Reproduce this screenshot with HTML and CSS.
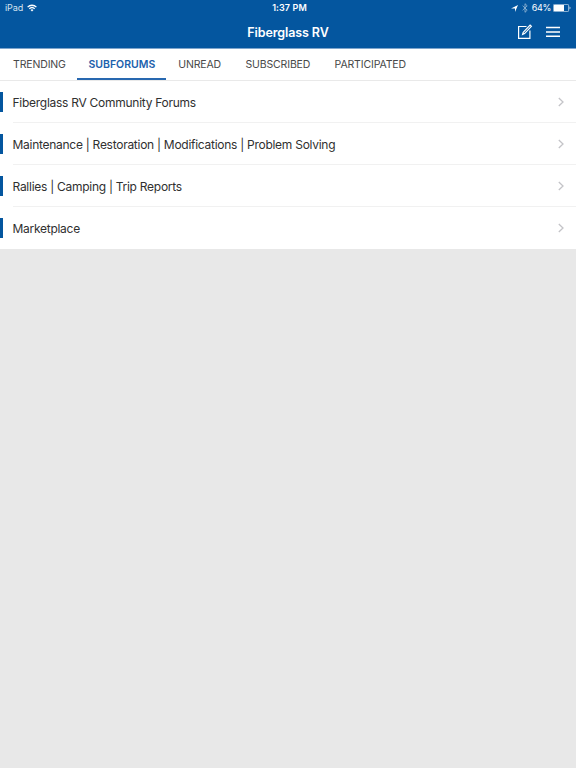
FILE: index.html
```html
<!DOCTYPE html>
<html lang="en">
<head>
    <meta charset="UTF-8">
    <meta name="viewport" content="width=device-width, initial-scale=1.0">
    <title>Fiberglass RV</title>
    <link rel="stylesheet" href="styles.css">
</head>
<body>
    <header class="header">
        <div class="status-bar">
            <div class="status-left">
                <span class="device">iPad</span>
                <svg class="wifi" width="10" height="8" viewBox="0 0 10 8" fill="none" stroke="#fff" stroke-width="1.3">
                    <path d="M0.6 3.1a6.2 6.2 0 0 1 8.8 0M2.3 4.8a3.9 3.9 0 0 1 5.4 0" />
                    <path d="M5 7.6L3.5 6.1a2.1 2.1 0 0 1 3 0z" fill="#fff" stroke="none" />
                </svg>
            </div>
            <span class="time">1:37 PM</span>
            <div class="status-right">
                <svg class="location" width="7" height="7" viewBox="0 0 7 7" fill="#fff">
                    <path d="M7 0L4 7V3.4H0z" />
                </svg>
                <svg class="bluetooth" width="6" height="10" viewBox="0 0 6 10" fill="none" stroke="#fff" stroke-width="0.8">
                    <path d="M0.6 2.7L5.2 7.2L3 9.3V0.7L5.2 2.8L0.6 7.3" />
                </svg>
                <span class="percent">64%</span>
                <svg class="battery" width="18" height="8" viewBox="0 0 18 8">
                    <rect x="0.4" y="0.4" width="15.2" height="7.2" rx="1" fill="none" stroke="#fff" stroke-width="0.6" />
                    <rect x="1" y="1" width="10" height="6" fill="#fff" />
                    <path d="M16.6 2.6v2.8a1.6 1.6 0 0 0 0-2.8z" fill="#fff" />
                </svg>
            </div>
        </div>
        <div class="nav-bar">
            <h1 class="title">Fiberglass RV</h1>
            <div class="nav-actions">
                <svg class="compose" width="16" height="16" viewBox="0 0 16 16" fill="none" stroke="#fff" stroke-width="1.2">
                    <path d="M9.5 2.5H1.6v11.9h11.3V6.5" />
                    <path d="M6.2 8.4L13.1 1l1.3 1.3L7.6 9.6l-2 .8z" />
                </svg>
                <svg class="menu" width="14" height="12" viewBox="0 0 14 12" fill="none" stroke="#fff" stroke-width="1.5">
                    <path d="M0 1.5h14M0 5.9h14M0 10.3h14" />
                </svg>
            </div>
        </div>
    </header>

    <nav class="tabs">
        <a class="tab">TRENDING</a>
        <a class="tab active">SUBFORUMS</a>
        <a class="tab">UNREAD</a>
        <a class="tab">SUBSCRIBED</a>
        <a class="tab">PARTICIPATED</a>
    </nav>

    <ul class="forums">
        <li class="forum">
            <div class="forum-row">
                <span>Fiberglass RV Community Forums</span>
                <svg class="chevron" width="6" height="10" viewBox="0 0 6 10"><path d="M0.8 1L5 5L0.8 9" /></svg>
            </div>
        </li>
        <li class="forum">
            <div class="forum-row">
                <span>Maintenance | Restoration | Modifications | Problem Solving</span>
                <svg class="chevron" width="6" height="10" viewBox="0 0 6 10"><path d="M0.8 1L5 5L0.8 9" /></svg>
            </div>
        </li>
        <li class="forum">
            <div class="forum-row">
                <span>Rallies | Camping | Trip Reports</span>
                <svg class="chevron" width="6" height="10" viewBox="0 0 6 10"><path d="M0.8 1L5 5L0.8 9" /></svg>
            </div>
        </li>
        <li class="forum">
            <div class="forum-row">
                <span>Marketplace</span>
                <svg class="chevron" width="6" height="10" viewBox="0 0 6 10"><path d="M0.8 1L5 5L0.8 9" /></svg>
            </div>
        </li>
    </ul>
</body>
</html>
```
FILE: styles.css
```css
* {
    box-sizing: border-box;
}
body {
    margin: 0;
    min-height: 100vh;
    background: #e8e8e8;
    font-family: Inter, "Liberation Sans", sans-serif;
    color: #303030;
}
svg {
    display: block;
    flex: none;
}
.header {
    height: 49px;
    background: #04569f;
    border-bottom: 1px solid #7ea5cd;
    color: #fff;
}
.status-bar {
    display: grid;
    grid-template-columns: 1fr auto 1fr;
    align-items: center;
    height: 16px;
    padding: 0 5px;
    font-size: 9px;
    line-height: 16px;
}
.status-left,
.status-right {
    display: flex;
    align-items: center;
}
.status-right {
    justify-content: flex-end;
}
.device {
    color: #d5e3f0;
    letter-spacing: -0.1px;
}
.wifi {
    margin-left: 4px;
}
.time {
    font-weight: 600;
    letter-spacing: 0.1px;
    margin-left: 3px;
}
.bluetooth {
    margin-left: 4px;
    opacity: 0.6;
}
.percent {
    margin-left: 4px;
    letter-spacing: -0.3px;
}
.battery {
    margin-left: 2px;
}
.nav-bar {
    display: grid;
    grid-template-columns: 1fr auto 1fr;
    align-items: center;
    height: 32px;
    padding-right: 16.5px;
}
.title {
    grid-column: 2;
    margin: 0 -16.5px 0 0;
    font-size: 12.5px;
    font-weight: 600;
    letter-spacing: -0.1px;
}
.nav-actions {
    display: flex;
    align-items: center;
    justify-content: flex-end;
    gap: 12.5px;
}
.tabs {
    display: flex;
    height: 32px;
    padding-left: 1px;
    background: #fff;
    border-bottom: 1px solid #e9e9e9;
}
.tab {
    height: 31px;
    padding: 0 12.4px 0 12px;
    font-size: 10.5px;
    letter-spacing: -0.14px;
    line-height: 31px;
    color: #484848;
}
.tab.active {
    padding: 0 11px;
    border-bottom: 2px solid #2868b0;
    font-weight: 600;
    letter-spacing: 0;
    color: #1c61ac;
}
.tab:first-child {
    padding-right: 11.7px;
}
.forums {
    margin: 0;
    padding: 0;
    list-style: none;
    background: #fff;
}
.forum {
    display: flex;
    align-items: center;
    height: 42px;
}
.forum::before {
    content: "";
    width: 3px;
    height: 20px;
    margin-right: 9.5px;
    background: #04569f;
}
.forum-row {
    flex: 1;
    display: flex;
    align-items: center;
    justify-content: space-between;
    height: 42px;
    padding-top: 1px;
    padding-right: 12px;
    border-bottom: 1px solid #f1f1f1;
    font-size: 12px;
    letter-spacing: -0.27px;
}
.forum:last-child .forum-row {
    border-bottom-color: #fff;
}
.chevron {
    fill: none;
    stroke: #c4c4c8;
    stroke-width: 1.3;
}
```
